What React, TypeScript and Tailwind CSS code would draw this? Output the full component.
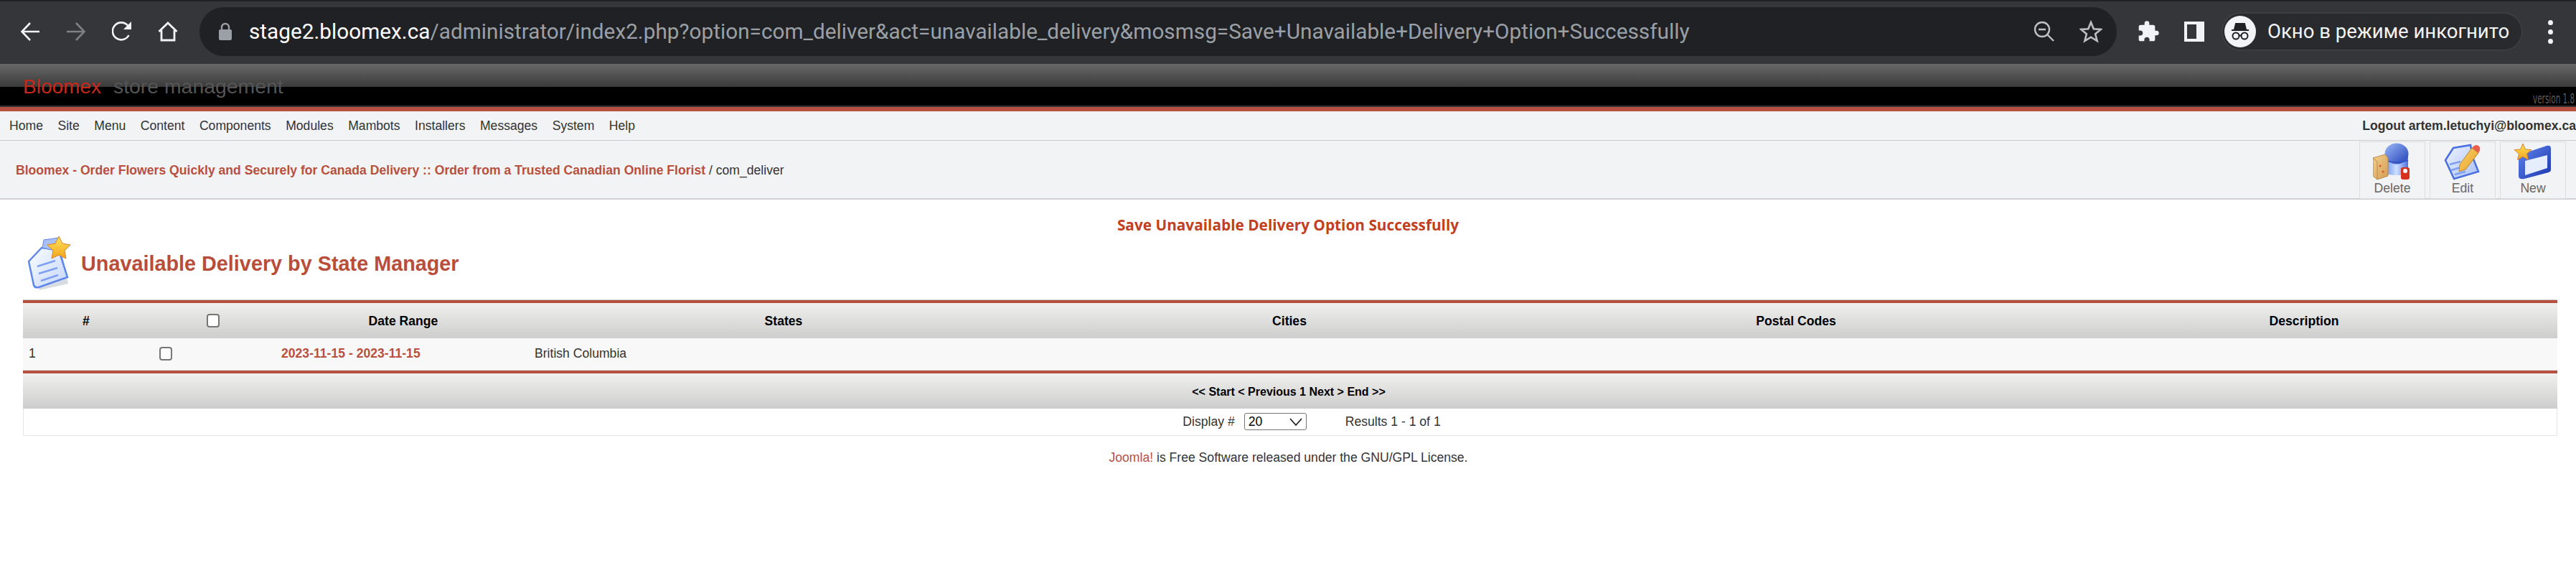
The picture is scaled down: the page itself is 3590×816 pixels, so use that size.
import type { ReactNode } from "react";

const menuItems = ["Home", "Site", "Menu", "Content", "Components", "Modules", "Mambots", "Installers", "Messages", "System", "Help"];

function ChromeIcon({ children }: { children: ReactNode }) {
  return <div className="w-[64px] h-[64px] flex items-center justify-center shrink-0">{children}</div>;
}

function BrowserBar() {
  return (
    <div className="h-[89px] bg-[#35363a] border-t-2 border-[#202124] flex items-start pl-[10px] pr-[10px] font-['Roboto',sans-serif]">
      <div className="flex items-center h-[84px]">
        <ChromeIcon>
          <svg width="28" height="28" viewBox="0 0 28 28" fill="none" stroke="#f1f3f4" strokeWidth="2.6"><path d="M27 14H3M14 2 2.500 14 14 26" /></svg>
        </ChromeIcon>
        <ChromeIcon>
          <svg width="28" height="28" viewBox="0 0 28 28" fill="none" stroke="#7f8083" strokeWidth="2.6"><path d="M1 14h24M14 2l11.500 12L14 26" /></svg>
        </ChromeIcon>
        <ChromeIcon>
          <svg width="28" height="28" viewBox="0 0 28 28" fill="none"><path d="M23.500 19A12 12 0 1 1 22 5.500" stroke="#f1f3f4" strokeWidth="2.600" /><path d="M27 0v11H16z" fill="#f1f3f4" /></svg>
        </ChromeIcon>
        <ChromeIcon>
          <svg width="28" height="28" viewBox="0 0 28 28" fill="none" stroke="#f1f3f4" strokeWidth="2.800"><path d="M1.500 14 14 2l12.500 12M5 12v14h18V12" /></svg>
        </ChromeIcon>
      </div>
      <div className="flex-1 min-w-0 ml-[12px] mt-[8px] h-[68px] rounded-full bg-[#202124] flex items-center pl-[26px] pr-[20px]">
        <svg width="20" height="26" viewBox="0 0 20 26" className="shrink-0">
          <path d="M5 11V7a5 5 0 0 1 10 0v4" fill="none" stroke="#9aa0a6" strokeWidth="2.400" />
          <rect x="1" y="10" width="18" height="15" rx="2" fill="#9aa0a6" />
        </svg>
        <div className="ml-[23px] text-[29.760px] text-[#9aa0a6] whitespace-nowrap flex-1">
          <span className="text-white">stage2.bloomex.ca</span>/administrator/index2.php?option=com_deliver&amp;act=unavailable_delivery&amp;mosmsg=Save+Unavailable+Delivery+Option+Successfully
        </div>
        <svg width="30" height="30" viewBox="0 0 30 30" fill="none" stroke="#bdc1c6" strokeWidth="2.400" className="shrink-0">
          <circle cx="12" cy="12" r="10" />
          <path d="M7 12h10M19 19l9 9" />
        </svg>
        <svg width="32" height="32" viewBox="0 0 32 32" fill="none" stroke="#bdc1c6" strokeWidth="2.600" className="ml-[34px] shrink-0">
          <path d="m16 3 3.800 9.200 10 .700-7.700 6.400 2.500 9.700-8.600-5.300-8.600 5.300 2.500-9.700-7.700-6.400 10-.700z" />
        </svg>
      </div>
      <div className="flex items-center h-[84px] ml-[12px]">
        <ChromeIcon>
          <svg width="32" height="32" viewBox="0 0 24 24" fill="#f1f3f4">
            <path d="M20.500 11H19V7a2 2 0 0 0-2-2h-4V3.500a2.500 2.500 0 0 0-5 0V5H4a2 2 0 0 0-2 2v3.800h1.500a2.700 2.700 0 0 1 0 5.400H2V20a2 2 0 0 0 2 2h3.800v-1.500a2.700 2.700 0 0 1 5.400 0V22H17a2 2 0 0 0 2-2v-4h1.500a2.500 2.500 0 0 0 0-5z" />
          </svg>
        </ChromeIcon>
        <ChromeIcon>
          <svg width="28" height="28" viewBox="0 0 28 28" fill="none"><path d="M0 0h28v28H0zM4 4v20h13V4z" fill="#f1f3f4" fillRule="evenodd" /></svg>
        </ChromeIcon>
        <div className="ml-[6px] w-[420px] h-[54px] rounded-full bg-[#292a2d] border-2 border-[#3c3d41] flex items-center pl-[2px]">
          <div className="w-[44px] h-[44px] rounded-full bg-[#f1f3f4] flex items-center justify-center shrink-0">
            <svg width="30" height="30" viewBox="0 0 30 30" fill="none" stroke="#202124" strokeWidth="2">
              <path d="M9 4h12l2 8H7z" fill="#202124" />
              <path d="M3 13h24" />
              <circle cx="9" cy="21" r="4.500" />
              <circle cx="21" cy="21" r="4.500" />
              <path d="M13.500 20.500h3" />
            </svg>
          </div>
          <span className="ml-[16px] text-[27.500px] text-[#f1f3f4] whitespace-nowrap">Окно в режиме инкогнито</span>
        </div>
        <div className="ml-[12px] w-[52px] flex flex-col items-center gap-[6px]">
          <span className="w-[7px] h-[7px] rounded-full bg-[#f1f3f4]" />
          <span className="w-[7px] h-[7px] rounded-full bg-[#f1f3f4]" />
          <span className="w-[7px] h-[7px] rounded-full bg-[#f1f3f4]" />
        </div>
      </div>
    </div>
  );
}

function DeleteIcon() {
  return (
    <svg width="54" height="52" viewBox="0 0 54 52">
      <defs>
        <linearGradient id="dome" x1="0" y1="0" x2="1" y2="1"><stop offset="0" stopColor="#9db9f7" /><stop offset="1" stopColor="#1f40b8" /></linearGradient>
        <linearGradient id="tank" x1="0" y1="0" x2="1" y2="0"><stop offset="0" stopColor="#6f93ef" /><stop offset=".5" stopColor="#cfe0ff" /><stop offset="1" stopColor="#4a6fe0" /></linearGradient>
        <linearGradient id="box" x1="0" y1="0" x2="1" y2="1"><stop offset="0" stopColor="#f3d08e" /><stop offset="1" stopColor="#d49c52" /></linearGradient>
      </defs>
      <path d="M17 18h32v22c0 3-7 5-16 5s-16-2-16-5z" fill="url(#tank)" />
      <ellipse cx="33" cy="15" rx="16.500" ry="14.500" fill="url(#dome)" />
      <path d="M17 24c4 2 10 3 16 3s12-1 16-3" fill="none" stroke="#2f50c8" strokeWidth="1.500" />
      <path d="M0 21 17 16l4 5v25L6 51 0 46z" fill="url(#box)" stroke="#b98a4c" />
      <path d="M0 21l6 5v25" fill="none" stroke="#b98a4c" />
      <circle cx="10" cy="32" r="1.500" fill="#d8503c" /><circle cx="14" cy="40" r="1.500" fill="#d8503c" />
      <rect x="39" y="34" width="12" height="17" rx="3" fill="#d7321f" />
      <rect x="42" y="36" width="6" height="6" rx="3" fill="#fff" />
    </svg>
  );
}

function EditIcon() {
  return (
    <svg width="52" height="52" viewBox="0 0 52 52">
      <defs>
        <linearGradient id="page" x1="0" y1="0" x2="1" y2="1"><stop offset="0" stopColor="#eef3ff" /><stop offset="1" stopColor="#a9c0f5" /></linearGradient>
        <linearGradient id="pencil" x1="0" y1="0" x2="1" y2="1"><stop offset="0" stopColor="#fbd668" /><stop offset="1" stopColor="#e89c2c" /></linearGradient>
      </defs>
      <path d="M2 24 13 7l24-4 3 17 8 20-34 10z" fill="url(#page)" stroke="#4a6fe0" strokeWidth="2.500" />
      <path d="M8 30l15-4M10 38l20-6M15 44l15-4" stroke="#7f9ff0" strokeWidth="2.500" />
      <path d="M22 30 39 7l9 7-18 23-9 3z" fill="url(#pencil)" stroke="#b8842a" />
      <path d="M39 7c3-4 6-5 9-3s3 6 0 10z" fill="#e8604a" />
    </svg>
  );
}

function NewIcon() {
  return (
    <svg width="52" height="52" viewBox="0 0 52 52">
      <defs>
        <linearGradient id="win" x1="0" y1="0" x2="1" y2="1"><stop offset="0" stopColor="#5f86f0" /><stop offset="1" stopColor="#1c36ab" /></linearGradient>
        <linearGradient id="star" x1="0" y1="0" x2="0" y2="1"><stop offset="0" stopColor="#ffe35c" /><stop offset="1" stopColor="#f2a51c" /></linearGradient>
      </defs>
      <path d="M6 17 45 4c4-1 6 0 6 4v29c0 2-1 3-3 4L14 50c-5 1-8 0-8-4z" fill="url(#win)" />
      <path d="M15 25 46 17v18L15 45z" fill="#e6eefd" />
      <path d="m12 1 3.500 8 8.500.600-6.500 5.500 2 8.400L12 19l-7.500 4.500 2-8.400L0 9.600 8.500 9z" fill="url(#star)" stroke="#d9822b" />
    </svg>
  );
}

function ToolButton({ label, children }: { label: string; children: ReactNode }) {
  return (
    <div className="w-[92px] h-[80px] border border-[#dddddd] flex flex-col items-center pt-[2px] text-[#666666]">
      <div className="h-[50px] flex items-center justify-center">{children}</div>
      <span className="leading-[22px] mt-[1px]">{label}</span>
    </div>
  );
}

function Header() {
  return (
    <>
      <div className="h-[60px] bg-[linear-gradient(#686868_0,#3a3a3a_32px,#000000_32px,#000000_58px,#333333_58px)] flex items-start justify-between">
        <div className="ml-[32px] mt-[15px] text-[28px] leading-[32px] whitespace-nowrap">
          <span className="text-[#c8281c]">Bloomex</span>
          <span className="ml-[17px] text-[28.400px] text-[#555555]">store management</span>
        </div>
        <span className="mt-[38px] w-[60px] whitespace-nowrap origin-left scale-x-[0.55] text-[19px] leading-[20px] text-[#5a5a5a] font-['DejaVu_Sans',sans-serif]">version 1.8</span>
      </div>
      <div className="h-[6px] bg-[#b85040]" />
      <div className="h-[41px] bg-[#f1f3f5] border-b border-[#cccccc] flex items-center justify-between pl-[13px] text-[#333333]">
        <div className="flex gap-[20.500px]">
          {menuItems.map((item) => (
            <span key={item}>{item}</span>
          ))}
        </div>
        <span className="font-bold whitespace-nowrap">Logout artem.letuchyi@bloomex.ca</span>
      </div>
      <div className="h-[82px] bg-[#f1f3f5] border-b-2 border-[#d0d0d0] flex items-start justify-between pl-[22px] pr-[14px] pt-px">
        <div className="mt-[30px] text-[#333333]">
          <span className="font-bold text-[#b85040]">Bloomex - Order Flowers Quickly and Securely for Canada Delivery :: Order from a Trusted Canadian Online Florist</span> / com_deliver
        </div>
        <div className="flex gap-[6px]">
          <ToolButton label="Delete"><DeleteIcon /></ToolButton>
          <ToolButton label="Edit"><EditIcon /></ToolButton>
          <ToolButton label="New"><NewIcon /></ToolButton>
        </div>
      </div>
    </>
  );
}

function PageTitle() {
  return (
    <div className="flex items-center pl-[38px] h-[78px] mt-[5px]">
      <svg width="64" height="76" viewBox="0 0 64 76" className="shrink-0">
        <defs>
          <linearGradient id="note" x1="0" y1="0" x2="1" y2="1"><stop offset="0" stopColor="#fbfdff" /><stop offset="1" stopColor="#c3d6fb" /></linearGradient>
          <linearGradient id="noteStar" x1="0" y1="0" x2="0" y2="1"><stop offset="0" stopColor="#ffe35c" /><stop offset="1" stopColor="#f2a51c" /></linearGradient>
        </defs>
        <path d="M2 37 19 17l27 7 8 40-40 9z" fill="#8d97ad" opacity=".35" transform="translate(3 2)" />
        <path d="M2 35 20 16l24 3 12 38-40 14c-4 1-6 0-7-3z" fill="url(#note)" stroke="#5f86ea" strokeWidth="2.500" />
        <path d="M21 16l2-11 22-3-2 19z" fill="#a9c0f4" stroke="#5f86ea" />
        <path d="M14 42l25-8M16 52l26-8M19 62l24-8" stroke="#7f9ff0" strokeWidth="2.500" />
        <path d="m44 0 5 10 11 2-8 8 2 11-10-5-10 5 2-11-8-8 11-2z" fill="url(#noteStar)" stroke="#d9822b" />
      </svg>
      <h1 className="ml-[11px] text-[28.800px] font-bold text-[#b84e3a] whitespace-nowrap">Unavailable Delivery by State Manager</h1>
    </div>
  );
}

function DataTable() {
  return (
    <div className="ml-[32px] mr-[26px] mt-[11px] border-t border-[#cccccc] text-[#333333]">
      <div className="border-t-4 border-[#b85040] h-[53px] bg-gradient-to-b from-[#f0f0ee] to-[#cdcdcd] grid grid-cols-[176px_178px_352px_708px_702px_710px_1fr] items-center text-center font-bold text-black">
        <span>#</span>
        <span className="flex justify-center"><input type="checkbox" className="appearance-none w-[18px] h-[19px] bg-white border-2 border-[#767676] rounded-[4px]" /></span>
        <span>Date Range</span>
        <span>States</span>
        <span>Cities</span>
        <span>Postal Codes</span>
        <span>Description</span>
      </div>
      <div className="h-[45px] pb-[2px] bg-[#f8f8f8] border-b border-[#dddddd] grid grid-cols-[96px_206px_411px_1fr] items-center">
        <span className="pl-[8px]">1</span>
        <span className="flex justify-center"><input type="checkbox" className="appearance-none w-[18px] h-[19px] bg-white border-2 border-[#767676] rounded-[4px]" /></span>
        <span className="pl-[58px] font-bold text-[#b85040]">2023-11-15 - 2023-11-15</span>
        <span>British Columbia</span>
      </div>
      <div className="border-t-4 border-[#b85040] h-[53px] bg-gradient-to-b from-[#f0f0ee] to-[#cdcdcd] pr-[4px] flex items-center justify-center text-[16px] font-bold text-black pt-[3px]">
        &lt;&lt; Start &lt; Previous 1 Next &gt; End &gt;&gt;
      </div>
      <div className="h-[38px] pb-[2px] border-x border-b border-[#e5e5e5] flex items-center justify-center text-[#333333] pl-[60px]">
        <span>Display #</span>
        <div className="relative ml-[13px] w-[87px] h-[24px]">
          <select defaultValue="20" className="appearance-none w-full h-full bg-white border border-[#767676] rounded-[3px] pl-[5px] text-black outline-none">
            <option>20</option>
          </select>
          <svg width="18" height="12" viewBox="0 0 18 12" fill="none" stroke="#222222" strokeWidth="1.800" className="absolute right-[6px] top-[7px] pointer-events-none">
            <path d="m1 1 8 9 8-9" />
          </svg>
        </div>
        <span className="ml-[54px]">Results 1 - 1 of 1</span>
      </div>
    </div>
  );
}

export default function App() {
  return (
    <div className="min-h-screen bg-white overflow-hidden font-['Liberation_Sans',Arial,sans-serif] text-[17.600px] leading-[20px]">
      <BrowserBar />
      <Header />
      <div className="mt-[25px] text-center font-['Open_Sans',sans-serif] font-bold text-[20.800px] text-[#c0401f]">Save Unavailable Delivery Option Successfully</div>
      <PageTitle />
      <DataTable />
      <p className="mt-[20px] text-center text-[#333333] pl-[1px]">
        <span className="text-[#b85040]">Joomla!</span> is Free Software released under the GNU/GPL License.
      </p>
    </div>
  );
}
